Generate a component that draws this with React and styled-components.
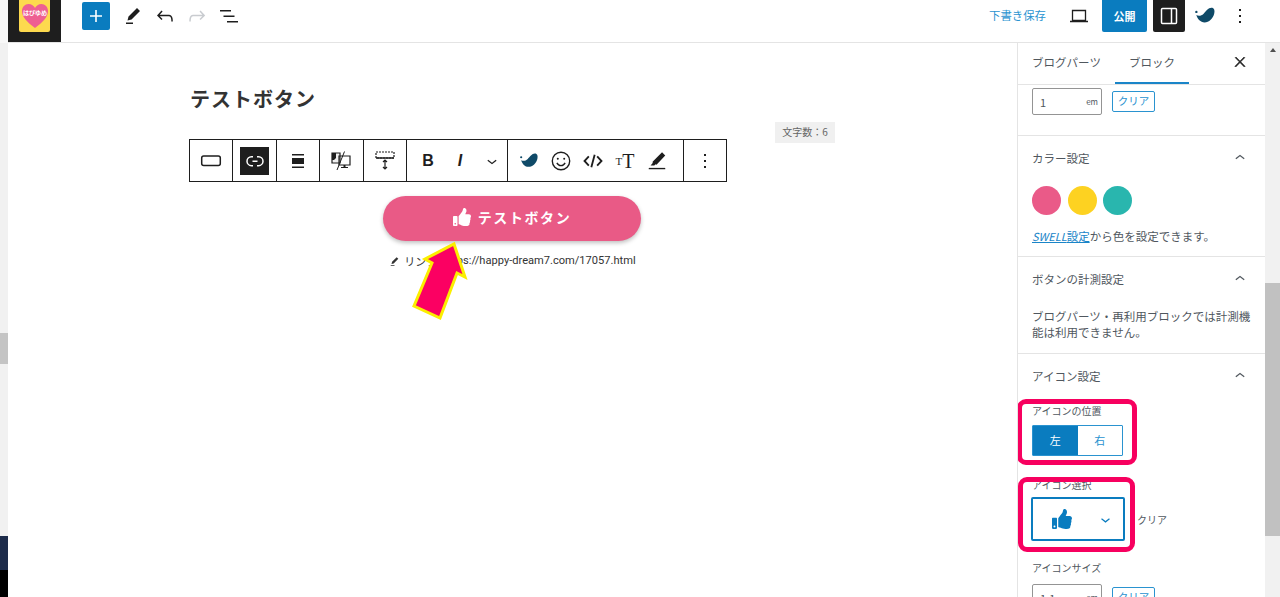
import React from "react";
import styled, { createGlobalStyle } from "styled-components";
import { FaThumbsUp } from "react-icons/fa";

const GlobalStyle = createGlobalStyle`
  html, body {
    margin: 0;
    height: 100%;
    overflow: hidden;
    background: #fff;
    font-family: "Noto Sans CJK JP", "Noto Sans", sans-serif;
  }
  #root { height: 100%; }
  * { box-sizing: border-box; }
`;

const Page = styled.div`
  display: flex;
  width: 1280px;
  height: 597px;
  overflow: hidden;
`;

const LeftStrip = styled.div`
  width: 8px;
  flex: none;
  display: flex;
  flex-direction: column;
  background: #f1f1f1;
`;

const StripTop = styled.div`
  height: 43px;
  background: #f8f8f8;
`;

const StripThumb = styled.div`
  height: 31px;
  margin-top: 290px;
  background: #c4c4c4;
`;

const StripDark = styled.div`
  margin-top: auto;
  height: 34px;
  background: #1d2b4a;
`;

const StripBlack = styled.div`
  height: 27px;
  background: #000;
`;

const Main = styled.div`
  flex: 1;
  min-width: 0;
  display: flex;
  flex-direction: column;
`;

const TopBar = styled.header`
  height: 43px;
  flex: none;
  display: flex;
  align-items: flex-start;
  border-bottom: 1px solid #e4e4e4;
  padding-right: 24px;
`;

const LogoCell = styled.div`
  width: 53px;
  height: 42px;
  flex: none;
  background: #1e1e1e;
  padding-left: 11px;
`;

const LogoCard = styled.div`
  width: 31px;
  height: 32px;
  background: #fdd94e;
  border-radius: 0 0 2px 2px;
  display: flex;
  align-items: center;
  justify-content: center;
`;

const AddButton = styled.div`
  width: 28px;
  height: 28px;
  margin: 2px 7px 0 21px;
  background: #0a7cbf;
  border-radius: 2px;
  color: #fff;
  display: flex;
  align-items: center;
  justify-content: center;
`;

const TopIcon = styled.div`
  width: 32px;
  height: 32px;
  flex: none;
  margin-right: ${(p) => p.$mr || 0}px;
  display: flex;
  align-items: center;
  justify-content: center;
  color: ${(p) => (p.$faded ? "#c9ccd0" : "#1e1e1e")};
`;

const Spacer = styled.div`
  flex: 1;
`;

const DraftLink = styled.div`
  font-size: 11.4px;
  line-height: 30px;
  color: #2a93d0;
  margin-right: 17px;
`;

const PublishButton = styled.div`
  width: 45px;
  height: 32px;
  margin: 0 6px 0 7px;
  background: #0a7cbf;
  border-radius: 0 0 2px 2px;
  color: #fff;
  font-size: 11px;
  font-weight: 700;
  line-height: 32px;
  text-align: center;
`;

const ToggleButton = styled.div`
  width: 32px;
  height: 32px;
  margin-right: 4px;
  background: #1e1e1e;
  border-radius: 0 0 2px 2px;
  color: #fff;
  display: flex;
  align-items: center;
  justify-content: center;
`;

const Body = styled.div`
  flex: 1;
  min-height: 0;
  display: flex;
`;

const Editor = styled.main`
  flex: 1;
  min-width: 0;
  padding: 44px 0 0 181px;
`;

const Canvas = styled.div`
  position: relative;
  width: 646px;
  display: flex;
  flex-direction: column;
`;

const PostTitle = styled.h1`
  margin: 0 0 28px 1px;
  font-size: 20px;
  line-height: 24px;
  font-weight: 700;
  letter-spacing: 1px;
  color: #333;
`;

const CountBadge = styled.div`
  position: absolute;
  top: 35px;
  right: 0;
  width: 60px;
  height: 21px;
  background: #f0f0f0;
  color: #666;
  font-size: 10px;
  line-height: 20px;
  text-align: center;
`;

const BlockToolbar = styled.div`
  width: 538px;
  height: 43px;
  display: flex;
  border: 1px solid #1e1e1e;
  background: #fff;
`;

const ToolGroup = styled.div`
  flex: ${(p) => (p.$wide ? "1" : "none")};
  width: ${(p) => (p.$wide ? "auto" : p.$w ? `${p.$w}px` : "43.4px")};
  display: flex;
  align-items: center;
  justify-content: ${(p) => (p.$start ? "flex-start" : "center")};
  padding-left: ${(p) => (p.$start ? "5px" : "0")};
  border-right: ${(p) => (p.$last ? "none" : "1px solid #1e1e1e")};
`;

const ToolIcon = styled.div`
  width: ${(p) => (p.$w ? `${p.$w}px` : "32px")};
  height: 28px;
  flex: none;
  display: flex;
  align-items: center;
  justify-content: center;
  color: ${(p) => (p.$active ? "#fff" : "#1e1e1e")};
  background: ${(p) => (p.$active ? "#1e1e1e" : "transparent")};
`;

const BoldGlyph = styled.span`
  font-family: "Liberation Sans", sans-serif;
  font-size: 16px;
  font-weight: 700;
  font-style: ${(p) => (p.$italic ? "italic" : "normal")};
`;

const SerifGlyph = styled.span`
  font-family: "Liberation Serif", serif;
  font-size: ${(p) => p.$size}px;
  line-height: 20px;
`;

const PillButton = styled.div`
  align-self: center;
  width: 258px;
  height: 45px;
  margin-top: 14px;
  padding-bottom: 3px;
  border-radius: 23px;
  background: #e95a86;
  box-shadow: 0 2px 4px rgba(0, 0, 0, 0.25);
  color: #fff;
  display: flex;
  align-items: center;
  justify-content: center;
  gap: 7px;
  font-size: 14px;
  font-weight: 700;
  letter-spacing: 1.6px;
`;

const LinkRow = styled.div`
  align-self: center;
  margin-top: 11px;
  display: flex;
  align-items: center;
  gap: 3px;
  font-size: 11px;
  line-height: 18px;
  color: #333;
`;

const LinkUrl = styled.span`
  font-family: "Roboto", sans-serif;
  font-size: 11.1px;
`;

const ArrowMark = styled.svg`
  position: absolute;
  left: 212px;
  top: 155px;
  overflow: visible;
`;

const Sidebar = styled.aside`
  width: 248px;
  flex: none;
  border-left: 1px solid #e4e4e4;
  overflow: hidden;
`;

const Tabs = styled.div`
  height: 42px;
  display: flex;
  align-items: stretch;
  padding-left: 6px;
  border-bottom: 1px solid #e4e4e4;
`;

const Tab = styled.div`
  width: ${(p) => p.$w}px;
  margin-left: ${(p) => p.$ml || 0}px;
  font-size: 11.5px;
  line-height: 38px;
  text-align: center;
  color: #50575e;
  height: 41px;
  border-bottom: ${(p) => (p.$active ? "2px solid #1a85c8" : "none")};
`;

const TabClose = styled.div`
  margin-left: auto;
  width: 50px;
  height: 38px;
  display: flex;
  align-items: center;
  justify-content: center;
  color: #1e1e1e;
`;

const Section = styled.section`
  padding: ${(p) => p.$pad || "0 14px"};
  border-bottom: ${(p) => (p.$open ? "none" : "1px solid #e4e4e4")};
`;

const SectionHead = styled.div`
  height: 44px;
  display: flex;
  align-items: center;
  justify-content: space-between;
  font-size: 11.5px;
  color: #50575e;
  padding-right: 1px;
`;

const UnitRow = styled.div`
  display: flex;
  align-items: center;
  gap: 10px;
`;

const UnitInput = styled.div`
  width: 70px;
  height: 27px;
  border: 1px solid #949494;
  border-radius: 2px;
  display: flex;
  align-items: center;
  justify-content: space-between;
  padding: 0 3px 0 7px;
  font-size: 11px;
  color: #50575e;
`;

const UnitLabel = styled.span`
  font-size: 8px;
`;

const ClearButton = styled.div`
  width: 43px;
  height: 21px;
  border: 1px solid #2a93d0;
  border-radius: 2px;
  color: #2a93d0;
  font-size: 10.5px;
  line-height: 18px;
  text-align: center;
`;

const Swatches = styled.div`
  display: flex;
  gap: 6.5px;
  margin-top: 6px;
`;

const Swatch = styled.div`
  width: 29px;
  height: 29px;
  border-radius: 50%;
  background: ${(p) => p.$color};
`;

const Note = styled.p`
  margin: ${(p) => p.$m || "0"};
  font-size: 11.5px;
  line-height: 16px;
  color: #50575e;
`;

const NoteLink = styled.span`
  color: #1a85c8;
  text-decoration: underline;
`;

const NoteLatin = styled.span`
  font-style: italic;
  font-size: 11px;
`;

const Field = styled.div`
  position: relative;
  margin-top: ${(p) => p.$mt || 0}px;
  margin-bottom: ${(p) => p.$mb || 0}px;
`;

const FieldLabel = styled.div`
  font-size: 10px;
  line-height: 14px;
  color: #50575e;
  margin-bottom: ${(p) => p.$mb || 0}px;
`;

const Highlight = styled.div`
  position: absolute;
  top: ${(p) => p.$top}px;
  left: ${(p) => p.$left}px;
  width: ${(p) => p.$w}px;
  height: ${(p) => p.$h}px;
  border: 5px solid #f7005f;
  border-radius: 9px;
  pointer-events: none;
`;

const Segments = styled.div`
  display: flex;
  width: 91px;
  height: 31px;
  border: 1px solid #2a93d0;
  border-radius: 1px;
`;

const Segment = styled.div`
  flex: 1;
  font-size: 11px;
  line-height: 28px;
  text-align: center;
  color: ${(p) => (p.$on ? "#fff" : "#2a93d0")};
  background: ${(p) => (p.$on ? "#0a7cbf" : "#fff")};
`;

const SelectRow = styled.div`
  display: flex;
  align-items: center;
  gap: 12px;
  margin-left: -1px;
`;

const IconSelect = styled.div`
  width: 94px;
  height: 44px;
  border: 2px solid #0a7cbf;
  border-radius: 2px;
  display: flex;
  align-items: center;
  color: #0a7cbf;
  padding-left: 19px;
  gap: 24px;
`;

const PlainClear = styled.span`
  font-size: 10px;
  color: #50575e;
`;

const ScrollTrack = styled.div`
  width: 15px;
  flex: none;
  display: flex;
  flex-direction: column;
  align-items: center;
  background: #f1f1f1;
`;

const ScrollArrow = styled.div`
  margin-top: 5px;
  width: 0;
  height: 0;
  border-left: 3.5px solid transparent;
  border-right: 3.5px solid transparent;
  border-bottom: 4px solid #505050;
`;

const ScrollThumb = styled.div`
  width: 100%;
  height: 253px;
  margin-top: 231px;
  background: #c1c1c1;
`;

const WpIcon = ({ d, size = 24, bold }) => (
  <svg
    width={size}
    height={size}
    viewBox="0 0 24 24"
    fill="currentColor"
    stroke={bold ? "currentColor" : "none"}
    strokeWidth={bold ? 1 : 0}
  >
    <path d={d} />
  </svg>
);

const ICONS = {
  plus: "M18 11.2h-5.2V6h-1.6v5.2H6v1.6h5.2V18h1.6v-5.2H18z",
  pen: "m19 7-3-3-8.5 8.5-1 4 4-1L19 7Zm-7 11.5H5V20h7v-1.5Z",
  undo: "M18.3 11.7c-.6-.6-1.4-.9-2.3-.9H6.7l2.9-3.3-1.1-1-4.5 5L8.5 16l1-1-2.7-2.7H16c.5 0 .9.2 1.3.5 1 1 1 3.4 1 4.5v.3h1.5v-.2c0-1.5 0-4.3-1.5-5.7z",
  redo: "M15.6 6.5l-1.1 1 2.9 3.3H8c-.9 0-1.7.3-2.3.9-1.4 1.5-1.4 4.2-1.4 5.6v.2h1.5v-.3c0-1.1 0-3.5 1-4.5.3-.3.7-.5 1.3-.5h9.2L14.5 15l1.1 1.1 4.6-4.6-4.6-5z",
  list: "M3 6h11v1.5H3V6Zm3.5 5.5h11V13h-11v-1.5ZM21 17H10v1.5h11V17Z",
  close: "M13 11.8l6.1-6.3-1-1-6.1 6.2-6.1-6.2-1 1 6.1 6.3-6.5 6.7 1 1 6.5-6.6 6.5 6.6 1-1z",
  up: "M6.5 12.4L12 8l5.5 4.4-.9 1.2L12 10l-4.5 3.6-1-1.2z",
  down: "M17.5 11.6L12 16l-5.5-4.4.9-1.2L12 14l4.5-3.6 1 1.2z",
  more: "M13 19h-2v-2h2v2zm0-6h-2v-2h2v2zm0-6h-2V5h2v2z",
  link: "M10 17.389H8.444A5.194 5.194 0 1 1 8.444 7H10v1.5H8.444a3.694 3.694 0 0 0 0 7.389H10v1.5ZM14 7h1.556a5.194 5.194 0 0 1 0 10.39H14v-1.5h1.556a3.694 3.694 0 0 0 0-7.39H14V7Zm-4.5 6h5v-1.5h-5V13Z",
};

const SwellMark = ({ size = 22 }) => (
  <svg width={size} height={size} viewBox="0 0 24 24" fill="#0f4a68">
    <circle cx="2.6" cy="7.5" r="1.3" />
    <path d="M2.5 11c2.5 1.5 5.5 1 8-1.5C13 7 15.5 3 19 3c3 0 4 3 3 6.5-1.2 5-5.5 9.5-10.5 9.5-4.5 0-7.5-3.5-9-8z" />
  </svg>
);

const BlockShape = () => (
  <svg width="24" height="24" viewBox="0 0 24 24" fill="none" stroke="currentColor" strokeWidth="1.5">
    <rect x="2.7" y="7" width="18.6" height="9.5" rx="2" />
  </svg>
);

const AlignShape = () => (
  <svg width="24" height="24" viewBox="0 0 24 24" fill="currentColor">
    <path d="M6 5h12v1.5H6zM6 9h12v6H6zM6 17.5h12V19H6z" />
  </svg>
);

const DeviceShape = () => (
  <svg width="24" height="24" viewBox="0 0 24 24" fill="none" stroke="currentColor" strokeWidth="1.2">
    <path d="M3 4h8v10H3z" fill="#f0f0f0" />
    <path d="M3 4h4v5l-2 2H3z" fill="currentColor" stroke="none" />
    <path d="M10 7h11v9H10zM12 18.5h7" />
    <path d="M15.5 16v2.5" strokeWidth="2" />
    <path d="M15.5 2.5 8 21" strokeWidth="1" />
  </svg>
);

const HeightShape = () => (
  <svg width="24" height="24" viewBox="0 0 24 24" fill="none" stroke="currentColor" strokeWidth="1.2">
    <path d="M3 3h18v6H3z" strokeDasharray="2 1" />
    <path d="M3 9h18" strokeWidth="1.5" />
    <path d="M12 11v9M10 13l2-2 2 2M10 18l2 2 2-2" />
  </svg>
);

const SmileShape = () => (
  <svg width="22" height="22" viewBox="0 0 24 24" fill="none" stroke="currentColor" strokeWidth="1.5">
    <circle cx="12" cy="12" r="9.5" />
    <circle cx="8.5" cy="9.5" r="1.1" fill="currentColor" stroke="none" />
    <circle cx="15.5" cy="9.5" r="1.1" fill="currentColor" stroke="none" />
    <path d="M7.5 14c1 2 2.7 3 4.5 3s3.5-1 4.5-3" />
  </svg>
);

const CodeShape = () => (
  <svg width="20" height="20" viewBox="0 0 24 24" fill="none" stroke="currentColor" strokeWidth="2.2">
    <path d="M7 6.5 1.8 12 7 17.5M17 6.5 22.2 12 17 17.5M14 4.5 10 19.5" />
  </svg>
);

const MarkerShape = () => (
  <svg width="22" height="22" viewBox="0 0 24 24" fill="currentColor">
    <path d="m21 6-3.5-3.5L8 12l-1 1 .5 1-2.5 3h4l1.5-1.5 1 .5 1-1L21 6Z" />
    <path d="M3 19.5h18V21H3z" />
  </svg>
);

const LaptopShape = () => (
  <svg width="24" height="24" viewBox="0 0 24 24" fill="none" stroke="currentColor" strokeWidth="1.3">
    <path d="M5.5 6.5h13v10h-13zM3 17.5h18" />
  </svg>
);

const PanelShape = () => (
  <svg width="24" height="24" viewBox="0 0 24 24" fill="none" stroke="currentColor" strokeWidth="1.5">
    <rect x="4.5" y="4.5" width="15" height="15" rx="1" />
    <path d="M14.5 4.5v15" />
  </svg>
);

const SITE_LABEL = "はぴゆめ";

function App() {
  return (
    <Page>
      <GlobalStyle />
      <LeftStrip>
        <StripTop />
        <StripThumb />
        <StripDark />
        <StripBlack />
      </LeftStrip>
      <Main>
        <TopBar>
          <LogoCell>
            <LogoCard>
              <svg width="28" height="26" viewBox="0 0 28 26">
                <path
                  d="M14 25C6 19 1 14 1 8c0-4 3-7 6.5-7C10.5 1 13 3 14 5c1-2 3.5-4 6.5-4C24 1 27 4 27 8c0 6-5 11-13 17z"
                  fill="#ee5f92"
                />
                <text x="14" y="12" fontSize="6" fontWeight="700" textAnchor="middle" fill="#fff">
                  {SITE_LABEL}
                </text>
              </svg>
            </LogoCard>
          </LogoCell>
          <AddButton>
            <WpIcon d={ICONS.plus} />
          </AddButton>
          <TopIcon>
            <WpIcon d={ICONS.pen} />
          </TopIcon>
          <TopIcon>
            <WpIcon d={ICONS.undo} />
          </TopIcon>
          <TopIcon $faded>
            <WpIcon d={ICONS.redo} />
          </TopIcon>
          <TopIcon>
            <WpIcon d={ICONS.list} />
          </TopIcon>
          <Spacer />
          <DraftLink>下書き保存</DraftLink>
          <TopIcon>
            <LaptopShape />
          </TopIcon>
          <PublishButton>公開</PublishButton>
          <ToggleButton>
            <PanelShape />
          </ToggleButton>
          <TopIcon $mr={3}>
            <SwellMark />
          </TopIcon>
          <TopIcon>
            <WpIcon d={ICONS.more} />
          </TopIcon>
        </TopBar>
        <Body>
          <Editor>
            <Canvas>
              <PostTitle>テストボタン</PostTitle>
              <CountBadge>文字数：6</CountBadge>
              <BlockToolbar>
                <ToolGroup>
                  <ToolIcon>
                    <BlockShape />
                  </ToolIcon>
                </ToolGroup>
                <ToolGroup>
                  <ToolIcon $active $w={29}>
                    <WpIcon d={ICONS.link} />
                  </ToolIcon>
                </ToolGroup>
                <ToolGroup>
                  <ToolIcon>
                    <AlignShape />
                  </ToolIcon>
                </ToolGroup>
                <ToolGroup>
                  <ToolIcon>
                    <DeviceShape />
                  </ToolIcon>
                </ToolGroup>
                <ToolGroup>
                  <ToolIcon>
                    <HeightShape />
                  </ToolIcon>
                </ToolGroup>
                <ToolGroup $w={101} $start>
                  <ToolIcon>
                    <BoldGlyph>B</BoldGlyph>
                  </ToolIcon>
                  <ToolIcon>
                    <BoldGlyph $italic>I</BoldGlyph>
                  </ToolIcon>
                  <ToolIcon>
                    <WpIcon d={ICONS.down} size={20} />
                  </ToolIcon>
                </ToolGroup>
                <ToolGroup $w={176.5} $start>
                  <ToolIcon>
                    <SwellMark size={20} />
                  </ToolIcon>
                  <ToolIcon>
                    <SmileShape />
                  </ToolIcon>
                  <ToolIcon>
                    <CodeShape />
                  </ToolIcon>
                  <ToolIcon>
                    <SerifGlyph $size={11}>T</SerifGlyph>
                    <SerifGlyph $size={20}>T</SerifGlyph>
                  </ToolIcon>
                  <ToolIcon>
                    <MarkerShape />
                  </ToolIcon>
                </ToolGroup>
                <ToolGroup $wide $last>
                  <ToolIcon>
                    <WpIcon d={ICONS.more} />
                  </ToolIcon>
                </ToolGroup>
              </BlockToolbar>
              <PillButton>
                <FaThumbsUp size={18} />
                テストボタン
              </PillButton>
              <LinkRow>
                <WpIcon d={ICONS.pen} size={13} />
                リンク: <LinkUrl>https://happy-dream7.com/17057.html</LinkUrl>
              </LinkRow>
              <ArrowMark width="60" height="80" viewBox="0 0 60 80">
                <path
                  d="M53 2 L64 35 L56 31 L39 76 L13 64 L31 21 L24 17 Z"
                  fill="#fb0062"
                  stroke="#fbee00"
                  strokeWidth="3"
                  strokeLinejoin="miter"
                />
              </ArrowMark>
            </Canvas>
          </Editor>
          <Sidebar>
            <Tabs>
              <Tab $w={85}>ブログパーツ</Tab>
              <Tab $w={74} $ml={6} $active>
                ブロック
              </Tab>
              <TabClose>
                <WpIcon d={ICONS.close} size={16} bold />
              </TabClose>
            </Tabs>
            <Section $pad="3px 14px 20px">
              <UnitRow>
                <UnitInput>
                  1<UnitLabel>em</UnitLabel>
                </UnitInput>
                <ClearButton>クリア</ClearButton>
              </UnitRow>
            </Section>
            <Section $pad="0 14px 12px">
              <SectionHead>
                カラー設定
                <WpIcon d={ICONS.up} size={20} />
              </SectionHead>
              <Swatches>
                <Swatch $color="#ea5a88" />
                <Swatch $color="#fdd221" />
                <Swatch $color="#29b6ae" />
              </Swatches>
              <Note $m="13px 0 0">
                <NoteLink>
                  <NoteLatin>SWELL</NoteLatin>設定
                </NoteLink>
                から色を設定できます。
              </Note>
            </Section>
            <Section $pad="0 14px 13px">
              <SectionHead>
                ボタンの計測設定
                <WpIcon d={ICONS.up} size={20} />
              </SectionHead>
              <Note $m="7px 0 0">ブログパーツ・再利用ブロックでは計測機能は利用できません。</Note>
            </Section>
            <Section $open>
              <SectionHead>
                アイコン設定
                <WpIcon d={ICONS.up} size={20} />
              </SectionHead>
              <Field $mt={6} $mb={22}>
                <Highlight $top={-5} $left={-15} $w={120} $h={66} />
                <FieldLabel $mb={7}>アイコンの位置</FieldLabel>
                <Segments>
                  <Segment $on>左</Segment>
                  <Segment>右</Segment>
                </Segments>
              </Field>
              <Field $mb={20}>
                <Highlight $top={-1} $left={-14} $w={117} $h={75} />
                <FieldLabel $mb={5}>アイコン選択</FieldLabel>
                <SelectRow>
                  <IconSelect>
                    <FaThumbsUp size={20} />
                    <WpIcon d={ICONS.down} size={19} />
                  </IconSelect>
                  <PlainClear>クリア</PlainClear>
                </SelectRow>
              </Field>
              <Field>
                <FieldLabel $mb={9}>アイコンサイズ</FieldLabel>
                <UnitRow>
                  <UnitInput>
                    1.1<UnitLabel>em</UnitLabel>
                  </UnitInput>
                  <ClearButton>クリア</ClearButton>
                </UnitRow>
              </Field>
            </Section>
          </Sidebar>
          <ScrollTrack>
            <ScrollArrow />
            <ScrollThumb />
          </ScrollTrack>
        </Body>
      </Main>
    </Page>
  );
}

export default App;
